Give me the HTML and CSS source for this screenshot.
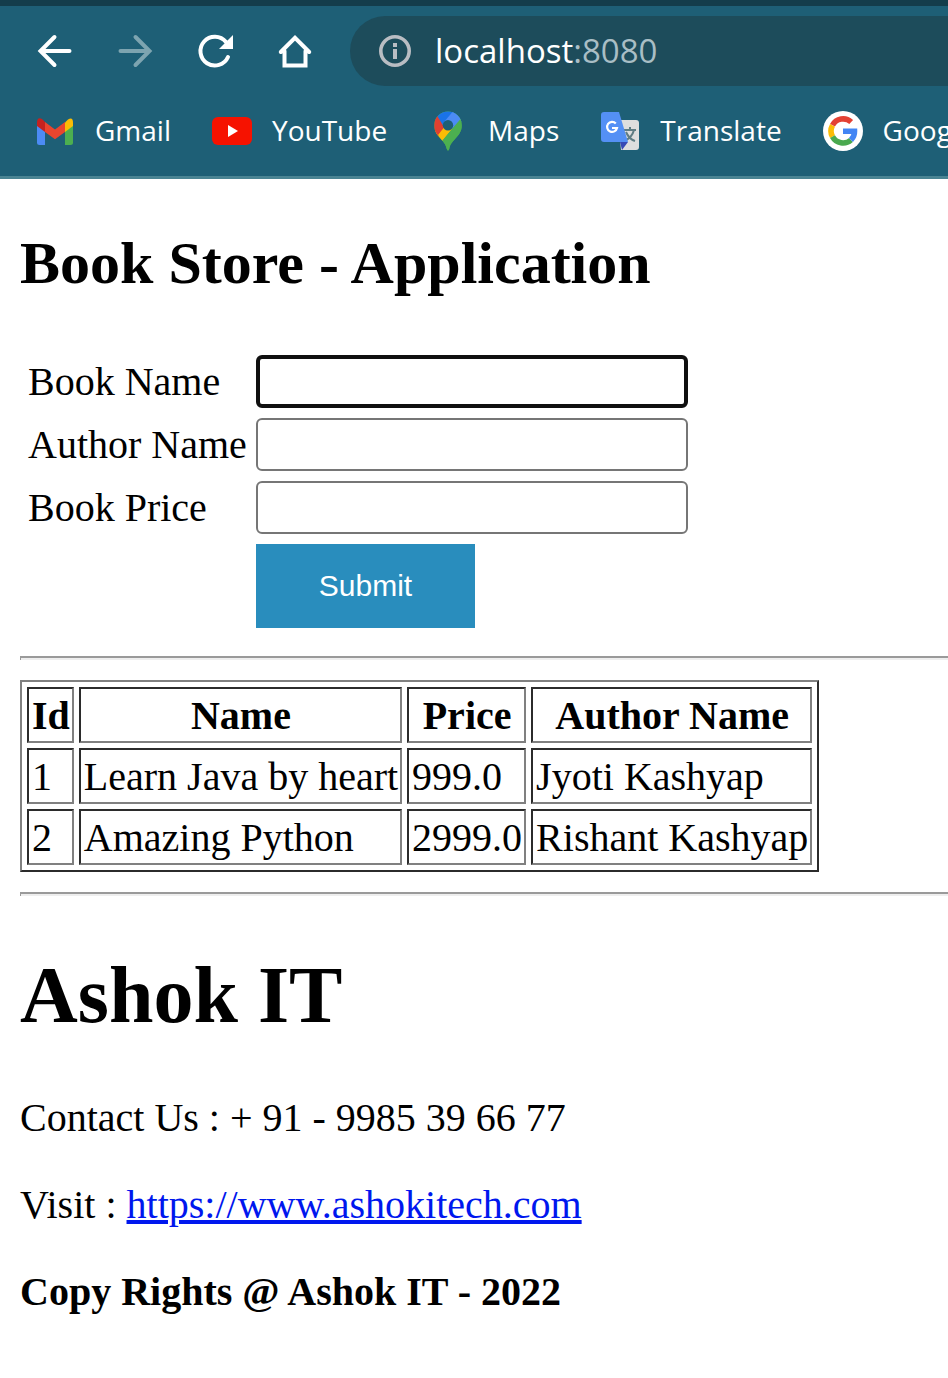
FILE: index.html
```html
<!DOCTYPE html>
<html lang="en">
<head>
<meta charset="utf-8">
<meta name="viewport" content="width=device-width, initial-scale=1">
<title>Book Store</title>
<link rel="stylesheet" href="styles.css">
</head>
<body>
<header class="browser">
  <div class="toolbar">
    <button class="nav-button" type="button" aria-label="Back">
      <svg class="icon" viewBox="0 0 40 40"><path d="M34.500 20H6M19.500 6 5.500 20l14 14" fill="none" stroke="#fff" stroke-width="4" stroke-linecap="round" stroke-linejoin="miter"/></svg>
    </button>
    <button class="nav-button" type="button" aria-label="Forward">
      <svg class="icon" viewBox="0 0 40 40"><path d="M5.500 20H34M20.500 6l14 14-14 14" fill="none" stroke="#7da4b0" stroke-width="4" stroke-linecap="round"/></svg>
    </button>
    <button class="nav-button" type="button" aria-label="Reload">
      <svg class="icon" viewBox="0 0 40 40"><path d="M33 26A14.400 14.400 0 1 1 31 11" fill="none" stroke="#fff" stroke-width="4" stroke-linecap="round"/><path d="M38 4v14H24z" fill="#fff"/></svg>
    </button>
    <button class="nav-button" type="button" aria-label="Home">
      <svg class="icon" viewBox="0 0 40 40"><path d="M5.800 21 20 6.800 34.200 21M9.500 20v14.500h21V20" fill="none" stroke="#fff" stroke-width="4" stroke-linecap="round" stroke-linejoin="miter"/></svg>
    </button>
    <div class="address">
      <svg class="icon" viewBox="0 0 40 40"><circle cx="20" cy="20" r="14.200" fill="none" stroke="#b9bdc3" stroke-width="3.600"/><path d="M18 12h4v4h-4zM18 18h4v10h-4z" fill="#b9bdc3"/></svg>
      <span class="url">localhost<span class="port">:8080</span></span>
    </div>
  </div>
  <nav class="bookmarks">
    <a class="bookmark" href="#gmail">
      <svg class="icon" viewBox="0 0 40 40"><path d="M2 13h8v21H4.500Q2 34 2 31.500z" fill="#4c8bf5"/><path d="M30 13h8v18.500q0 2.500-2.500 2.500H30z" fill="#4caf50"/><path d="M30 11.500 33 8.500Q38 5.500 38 12v3l-8 6z" fill="#fbbc04"/><path d="M2 12Q2 5.500 7 8l3 3v10l-8-6z" fill="#c5221f"/><path d="M10 11l10 7.500L30 11v10l-10 7.300L10 21z" fill="#e8452f"/></svg>
      <span>Gmail</span>
    </a>
    <a class="bookmark" href="#youtube">
      <svg class="icon" viewBox="0 0 40 40"><rect y="6" width="40" height="28" rx="6" fill="#f61200"/><path d="M16 14v12l10-6z" fill="#fff"/></svg>
      <span>YouTube</span>
    </a>
    <a class="bookmark" href="#maps">
      <svg class="icon" viewBox="0 0 40 40"><clipPath id="pin"><path d="M20 .500A13.700 13.700 0 0 0 6.300 14.500C6.300 26 17 28 18.800 38q1.200 3 2.400 0C23 28 33.700 26 33.700 14.500A13.700 13.700 0 0 0 20 .500z"/></clipPath><g clip-path="url(#pin)"><path d="M0 0h40v40H0z" fill="#4caf50"/><path d="M4 24 16 10 24 18 10 35z" fill="#fbbc04"/><path d="M4 0 9.500 5 20 14 8.500 27 0 20z" fill="#e04030"/><path d="M9.500 5.500 14-2H25L28 2 16 16z" fill="#1a73e8"/><path d="M24.500 1 30 0 36 9 24 18 16 11z" fill="#4c8bf5"/><path d="M32.500 8 42 8V42H15V28.500z" fill="#4caf50"/><path d="M24 17.500 15 28.500 10 24 18 14z" fill="#fbbc04"/></g><circle cx="20" cy="14.300" r="5.200" fill="#1e5f76"/></svg>
      <span>Maps</span>
    </a>
    <a class="bookmark" href="#translate">
      <svg class="icon" viewBox="0 0 40 40"><path d="M18 9h18q3 0 3 3v24q0 3-3 3H21z" fill="#dedede"/><path d="M20 31h8l-6 8z" fill="#3649b5"/><path d="M24 19h12M30 16v3M34 19q-2 8-10 11M26 21q3 7 9 9" fill="none" stroke="#607d84" stroke-width="2"/><path d="M4 1h15l9 30H4q-3 0-3-3V4q0-3 3-3z" fill="#5490f5"/><path d="M15.800 12.500A5 5 0 1 0 17 17h-5" fill="none" stroke="#fff" stroke-width="2.200"/></svg>
      <span>Translate</span>
    </a>
    <a class="bookmark" href="#google">
      <svg class="icon" viewBox="0 0 40 40"><circle cx="20" cy="20" r="20" fill="#fff"/><g fill="none" stroke-width="5.600"><path d="M28.200 11A12 12 0 0 0 9.500 14.300" stroke="#e34133"/><path d="M9.500 14.300A12 12 0 0 0 9.500 25.700" stroke="#fbbc05"/><path d="M9.500 25.700A12 12 0 0 0 28 29" stroke="#4aa94f"/><path d="M28 29A12 12 0 0 0 31.500 20.200H20" stroke="#4285f4"/></g></svg>
      <span>Google</span>
    </a>
  </nav>
</header>
<main class="page">
  <h2 class="title">Book Store - Application</h2>
  <form>
    <table class="form-table">
      <tr><td><label for="book">Book Name</label></td><td><input class="field field-active" id="book" type="text"></td></tr>
      <tr><td><label for="author">Author Name</label></td><td><input class="field" id="author" type="text"></td></tr>
      <tr><td><label for="price">Book Price</label></td><td><input class="field" id="price" type="text"></td></tr>
      <tr><td></td><td><button class="submit" type="submit">Submit</button></td></tr>
    </table>
  </form>
  <hr class="rule">
  <table class="books">
    <thead><tr><th>Id</th><th>Name</th><th>Price</th><th>Author Name</th></tr></thead>
    <tbody>
      <tr><td>1</td><td>Learn Java by heart</td><td>999.0</td><td>Jyoti Kashyap</td></tr>
      <tr><td>2</td><td>Amazing Python</td><td>2999.0</td><td>Rishant Kashyap</td></tr>
    </tbody>
  </table>
  <hr class="rule">
  <h1 class="company">Ashok IT</h1>
  <p class="line">Contact Us : + 91 - 9985 39 66 77</p>
  <p class="line">Visit : <a class="link" href="https://www.ashokitech.com">https://www.ashokitech.com</a></p>
  <p class="line"><b>Copy Rights @ Ashok IT - 2022</b></p>
</main>
</body>
</html>
```
FILE: styles.css
```css
* { box-sizing: border-box; }
body {
  margin: 0;
  background: #fff;
  color: #000;
  font: 40px/47px "Liberation Serif", "Times New Roman", serif;
}
.browser {
  overflow: hidden;
  background: #1e5f76;
  border-top: 6px solid #143d4b;
  border-bottom: 3px solid #4a8493;
  color: #fff;
  font-family: "Open Sans", "Noto Sans", sans-serif;
}
.icon { display: block; flex: none; width: 40px; height: 40px; }
.toolbar { display: flex; align-items: center; gap: 40px; padding: 10px 0 0 35px; }
.nav-button { padding: 0; border: 0; background: none; }
.address {
  display: flex;
  flex: 1;
  align-items: center;
  gap: 20px;
  height: 70px;
  margin-left: -5px;
  padding-left: 25px;
  border-radius: 35px 0 0 35px;
  background: #1d4c5b;
}
.url { font-size: 33px; line-height: 40px; }
.port { color: #a9bec5; }
.bookmarks {
  display: flex;
  gap: 41px;
  padding: 25px 0 25px 35px;
  font-size: 28px;
  line-height: 38px;
}
.bookmark {
  display: flex;
  flex: none;
  gap: 20px;
  color: inherit;
  text-decoration: none;
}
.page { display: flow-root; padding: 0 0 0 20px; }
.title { margin: 50px 0 49px; font-size: 60px; line-height: 69px; }
.form-table { margin-bottom: 21px; border-spacing: 5px; }
.form-table td { padding: 3px 2px 2px; }
.form-table td:first-child { padding-left: 3px; }
.field {
  display: block;
  width: 432px;
  height: 53px;
  padding: 2px 5px;
  border: 2px solid #767676;
  border-radius: 6px;
  outline: 0;
  background: #fff;
  font: 33px "Liberation Sans", Arial, sans-serif;
}
.field-active { border: 4px solid #101010; }
.submit {
  display: block;
  padding: 24px 63px;
  border: 0;
  background: #298dbd;
  color: #fff;
  font: 30px/36px "Liberation Sans", Arial, sans-serif;
}
.rule {
  height: 4px;
  margin: 20px 0;
  border: 0;
  border-top: 2px solid #9a9a9a;
  border-left: 1px solid #9a9a9a;
  background: #eee;
}
.books {
  border: 2px solid;
  border-color: #808080 #2b2b2b #2b2b2b #808080;
  border-spacing: 5px;
}
.books th, .books td {
  padding: 3px 2px 2px 3px;
  border: 2px solid;
  border-color: #2b2b2b #808080 #808080 #2b2b2b;
}
.company { margin: 53px 0; font-size: 80px; line-height: 92px; }
.line { margin: 40px 0; }
.link { color: #0017ee; }
```
